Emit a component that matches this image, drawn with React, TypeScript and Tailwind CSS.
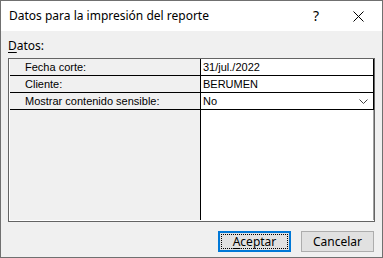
const rows = [
  { label: 'Fecha corte:', value: '31/jul./2022' },
  { label: 'Cliente:', value: 'BERUMEN' },
  { label: 'Mostrar contenido sensible:', value: 'No', select: true },
]

export default function App() {
  return (
    <div className="flex h-[258px] w-[383px] flex-col border border-[#707070] bg-[#f0f0f0] font-['Noto_Sans','Liberation_Sans',sans-serif] text-[12px] text-black">
      {/* Title bar */}
      <div className="flex h-[30px] flex-none items-center bg-white pl-[8px]">
        <span className="flex-1 leading-none">Datos para la impresión del reporte</span>
        <span className="mr-[34px] text-[14px] leading-none">?</span>
        <svg width="11" height="11" viewBox="0 0 11 11" className="mr-[18px]">
          <path d="M0.5 0.5 L10.5 10.5 M10.5 0.5 L0.5 10.5" stroke="#000" strokeWidth="1" />
        </svg>
      </div>

      {/* Content */}
      <div className="flex flex-1 flex-col px-[7px]">
        <div className="mt-[6px] h-[17px] leading-[17px]">
          <span className="underline underline-offset-2">D</span>atos:
        </div>
        <div className="mt-[4px] flex h-[164px] flex-col border border-[#646464] font-['Liberation_Sans',sans-serif] text-[11px]">
          <div className="flex flex-1 flex-col border-b border-l border-white">
            {rows.map(row => (
              <div key={row.label} className="grid h-[17px] grid-cols-[190px_1fr] border-b border-black">
                <div className="pl-[15px] leading-[16px]">{row.label}</div>
                <div className="flex items-center border-l border-r border-black bg-white pl-[2px] pr-[5px] leading-[16px]">
                  <span className="flex-1">{row.value}</span>
                  {row.select && (
                    <svg width="9" height="5" viewBox="0 0 9 5" className="mt-[1px]">
                      <path d="M0.5 0.5 L4.5 4.5 L8.5 0.5" fill="none" stroke="#404040" strokeWidth="1" />
                    </svg>
                  )}
                </div>
              </div>
            ))}
            <div className="grid flex-1 grid-cols-[190px_1fr]">
              <div />
              <div className="border-l border-r border-l-black border-r-[#a0a0a0] bg-white" />
            </div>
          </div>
        </div>

        {/* Buttons */}
        <div className="mt-[9px] flex justify-end gap-[10px] pr-[1px]">
          <button className="flex h-[21px] w-[73px] items-center justify-center border-2 border-[#0078d7] bg-[#e1e1e1] p-[1px]">
            <span className="flex h-full w-full items-center justify-center border border-dotted border-black leading-none">
              <span className="underline underline-offset-2">A</span>ceptar
            </span>
          </button>
          <button className="flex h-[21px] w-[73px] items-center justify-center border border-[#adadad] bg-[#e1e1e1] leading-none">
            Cancelar
          </button>
        </div>
      </div>
    </div>
  )
}
